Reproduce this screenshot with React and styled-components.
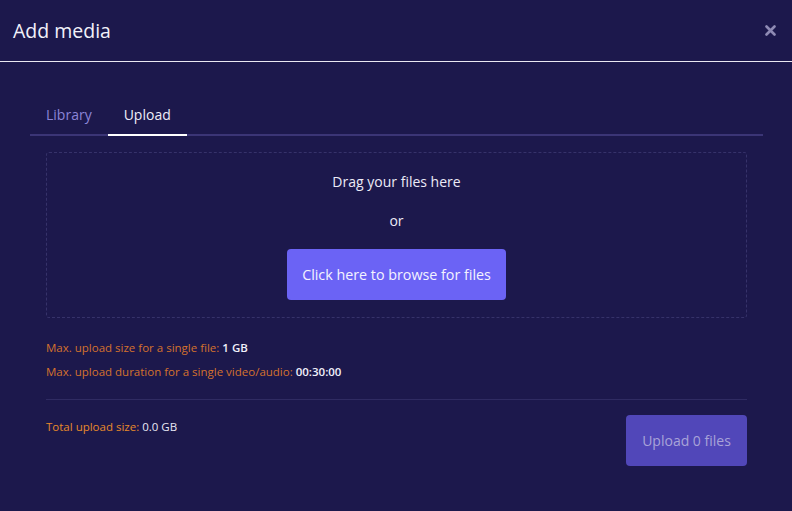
import React, { useState } from "react";
import styled, { createGlobalStyle } from "styled-components";

const GlobalStyle = createGlobalStyle`
  html, body {
    margin: 0;
    padding: 0;
    background: #1c184c;
  }
  body {
    font-family: "Open Sans", "Noto Sans", sans-serif;
    color: #e8e6f5;
  }
`;

const Modal = styled.div`
  width: 792px;
  height: 511px;
  background: #1c184c;
  display: flex;
  flex-direction: column;
`;

const Header = styled.div`
  height: 62px;
  display: flex;
  align-items: center;
  justify-content: space-between;
  padding: 0 16px 0 13px;
  border-bottom: 1px solid #e9e8f2;
  box-sizing: border-box;
`;

const Title = styled.h2`
  margin: 0;
  font-size: 19.5px;
  font-weight: 500;
  color: #f2f1fa;
`;

const CloseButton = styled.button`
  background: transparent;
  border: none;
  padding: 0;
  cursor: pointer;
  display: flex;
`;

const Body = styled.div`
  padding: 40px 29px 0 30px;
  display: flex;
  flex-direction: column;
`;

const TabList = styled.div`
  display: flex;
  border-bottom: 2px solid #3b3576;
`;

const Tab = styled.button`
  background: transparent;
  border: none;
  font-family: inherit;
  font-size: 14px;
  padding: 3px 16px 10px;
  margin-bottom: -2px;
  cursor: pointer;
  color: ${(p) => (p.$active ? "#eeecf8" : "#8c85d8")};
  border-bottom: 2px solid ${(p) => (p.$active ? "#ffffff" : "transparent")};
`;

const Panel = styled.div`
  padding: 0 16px;
  display: flex;
  flex-direction: column;
`;

const DropZone = styled.div`
  margin-top: 16px;
  height: 166px;
  box-sizing: border-box;
  border: 1px dashed #36326a;
  border-radius: 3px;
  display: flex;
  flex-direction: column;
  align-items: center;
  padding-top: 19px;
`;

const DropText = styled.div`
  font-size: 14px;
  color: #ecebf7;
  line-height: 20px;
`;

const OrText = styled(DropText)`
  margin-top: 19px;
`;

const BrowseButton = styled.button`
  margin-top: 18px;
  width: 219px;
  height: 51px;
  border: none;
  border-radius: 4px;
  background: #6b63f5;
  color: #f4f3ff;
  font-family: inherit;
  font-size: 14.3px;
  cursor: pointer;
`;

const Limits = styled.div`
  margin-top: 21px;
  display: flex;
  flex-direction: column;
  gap: 6px;
  padding-bottom: 18px;
  border-bottom: 1px solid #2f2b62;
`;

const InfoLine = styled.div`
  font-size: 11.5px;
  line-height: 18px;
  color: #d4722c;

  b {
    color: #f1f0fa;
    font-weight: 600;
  }
`;

const Footer = styled.div`
  display: flex;
  justify-content: space-between;
  align-items: flex-start;
  padding-top: 15px;
`;

const TotalLine = styled(InfoLine)`
  color: #e88a2a;
  margin-top: 3px;

  span {
    color: #e9e8f4;
  }
`;

const UploadButton = styled.button`
  width: 121px;
  height: 51px;
  border: none;
  border-radius: 4px;
  background: #5147b9;
  color: #a8a3d8;
  font-family: inherit;
  font-size: 14px;
  cursor: default;
`;

export default function App() {
  const [tab, setTab] = useState("upload");
  return (
    <>
      <GlobalStyle />
      <Modal>
        <Header>
          <Title>Add media</Title>
          <CloseButton aria-label="Close">
            <svg width="11" height="11" viewBox="0 0 11 11">
              <path d="M1.5 1.5 L9.5 9.5 M9.5 1.5 L1.5 9.5" stroke="#8e8ab4" strokeWidth="2.6" strokeLinecap="round" />
            </svg>
          </CloseButton>
        </Header>
        <Body>
          <TabList>
            <Tab $active={tab === "library"} onClick={() => setTab("library")}>Library</Tab>
            <Tab $active={tab === "upload"} onClick={() => setTab("upload")}>Upload</Tab>
          </TabList>
          <Panel>
            <DropZone>
              <DropText>Drag your files here</DropText>
              <OrText>or</OrText>
              <BrowseButton>Click here to browse for files</BrowseButton>
            </DropZone>
            <Limits>
              <InfoLine>Max. upload size for a single file: <b>1 GB</b></InfoLine>
              <InfoLine>Max. upload duration for a single video/audio: <b>00:30:00</b></InfoLine>
            </Limits>
            <Footer>
              <TotalLine>Total upload size: <span>0.0 GB</span></TotalLine>
              <UploadButton disabled>Upload 0 files</UploadButton>
            </Footer>
          </Panel>
        </Body>
      </Modal>
    </>
  );
}
